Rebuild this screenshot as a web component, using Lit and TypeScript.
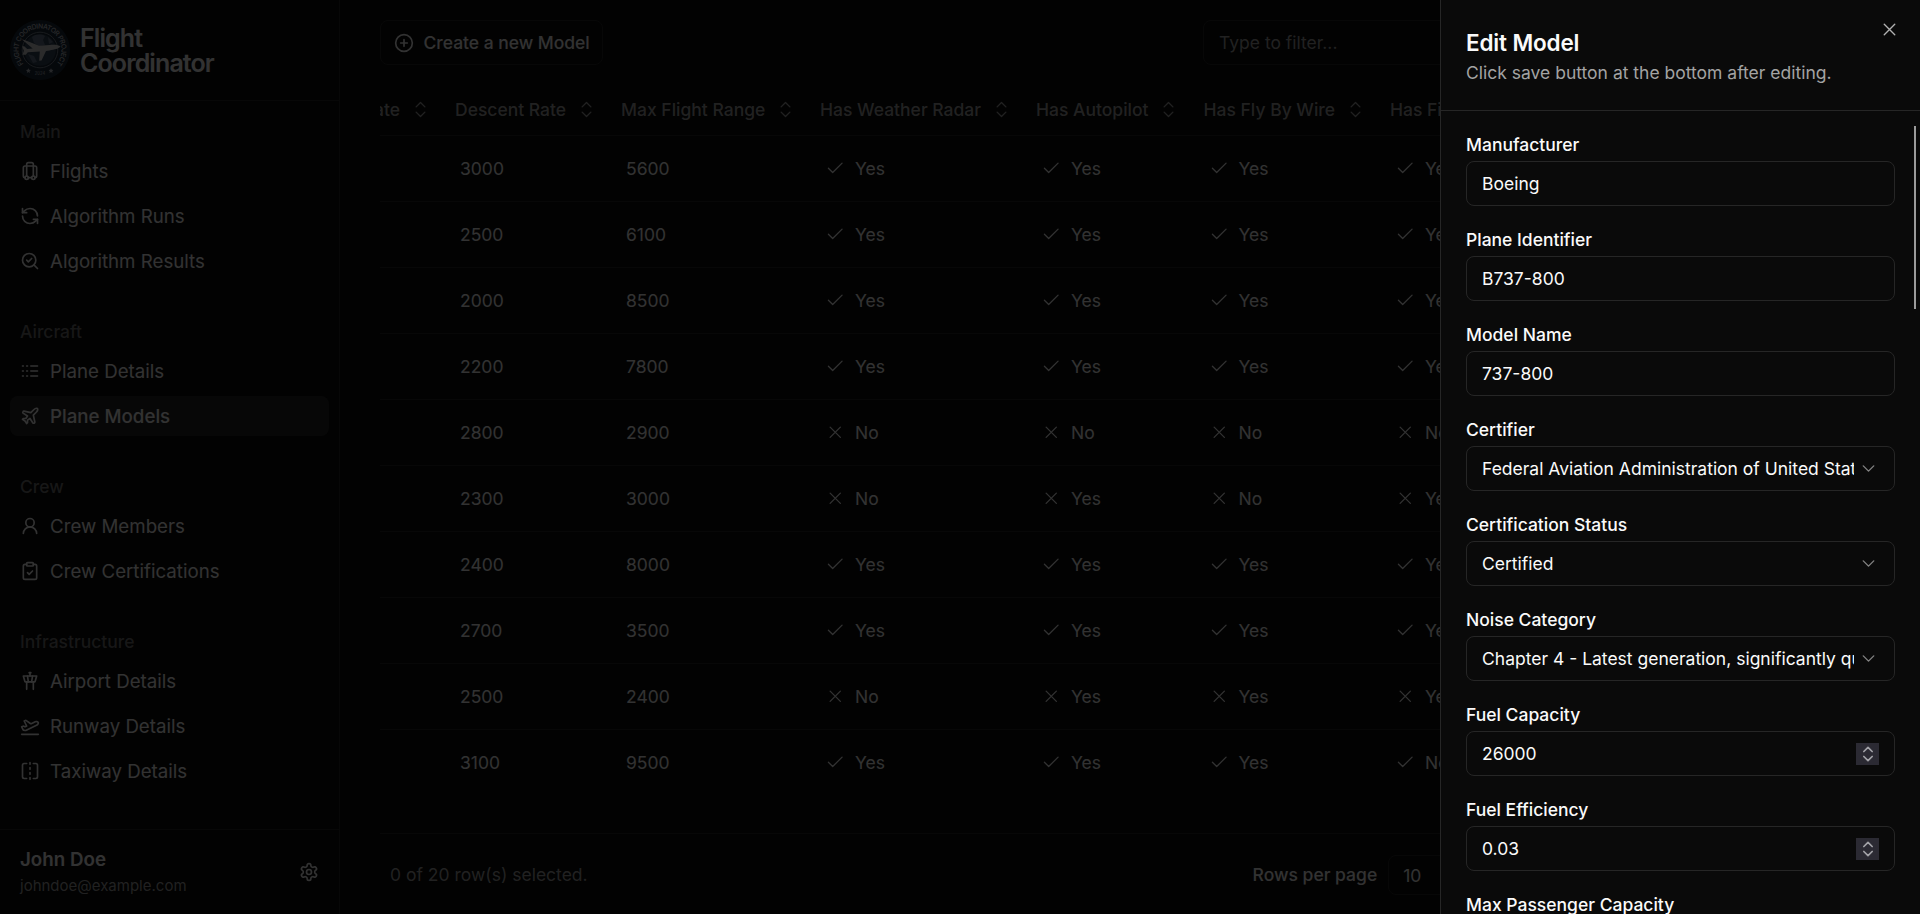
import { LitElement, html, css, svg } from "lit";
import { customElement } from "lit/decorators.js";

const paths: Record<string, any> = {
  luggage: svg`<path d="M6 20a2 2 0 0 1-2-2V8a2 2 0 0 1 2-2h12a2 2 0 0 1 2 2v10a2 2 0 0 1-2 2"/><path d="M8 18V4a2 2 0 0 1 2-2h4a2 2 0 0 1 2 2v14"/><path d="M10 20h4"/><circle cx="16" cy="20" r="2"/><circle cx="8" cy="20" r="2"/>`,
  refresh: svg`<path d="M21 12a9 9 0 0 0-9-9 9.75 9.75 0 0 0-6.74 2.74L3 8"/><path d="M3 3v5h5"/><path d="M3 12a9 9 0 0 0 9 9 9.75 9.75 0 0 0 6.74-2.74L21 16"/><path d="M16 16h5v5"/>`,
  search: svg`<path d="m8 11 2 2 4-4"/><circle cx="11" cy="11" r="8"/><path d="m21 21-4.3-4.3"/>`,
  logs: svg`<path d="M13 12h8M13 18h8M13 6h8M3 12h1M3 18h1M3 6h1M8 12h1M8 18h1M8 6h1"/>`,
  plane: svg`<path d="M17.8 19.2 16 11l3.5-3.5C21 6 21.5 4 21 3c-1-.5-3 0-4.5 1.5L13 8 4.8 6.2c-.5-.1-.9.1-1.1.5l-.3.5c-.2.5-.1 1 .3 1.3L9 12l-2 3H4l-1 1 3 2 2 3 1-1v-3l3-2 3.5 5.3c.3.4.8.5 1.3.3l.5-.2c.4-.3.6-.7.5-1.2z"/>`,
  user: svg`<circle cx="12" cy="8" r="5"/><path d="M20 21a8 8 0 0 0-16 0"/>`,
  clipboard: svg`<rect width="8" height="4" x="8" y="2" rx="1"/><path d="M16 4h2a2 2 0 0 1 2 2v14a2 2 0 0 1-2 2H6a2 2 0 0 1-2-2V6a2 2 0 0 1 2-2h2"/><path d="m9 14 2 2 4-4"/>`,
  tower: svg`<path d="M18.2 12.27 20 6H4l1.8 6.27a1 1 0 0 0 .95.73h10.5a1 1 0 0 0 .96-.73Z"/><path d="M8 13v9M16 22v-9M9 6l1 7M15 6l-1 7M12 6V2M13 2h-2"/>`,
  takeoff: svg`<path d="M2 22h20"/><path d="M6.36 17.4 4 17l-2-4 1.1-.55a2 2 0 0 1 1.8 0l.17.1a2 2 0 0 0 1.8 0L8 12 5 6l.9-.45a2 2 0 0 1 2.09.2l4.02 3a2 2 0 0 0 2.1.2l4.19-2.06a2.41 2.41 0 0 1 1.73-.17L21 7a1.4 1.4 0 0 1 .87 1.99l-.38.76c-.23.46-.6.84-1.07 1.08L7.58 17.2a2 2 0 0 1-1.22.18Z"/>`,
  flip: svg`<path d="M8 3H5a2 2 0 0 0-2 2v14c0 1.1.9 2 2 2h3"/><path d="M16 3h3a2 2 0 0 1 2 2v14a2 2 0 0 1-2 2h-3"/><path d="M12 20v2M12 14v2M12 8v2M12 2v2"/>`,
  settings: svg`<path d="M12.22 2h-.44a2 2 0 0 0-2 2v.18a2 2 0 0 1-1 1.73l-.43.25a2 2 0 0 1-2 0l-.15-.08a2 2 0 0 0-2.73.73l-.22.38a2 2 0 0 0 .73 2.73l.15.1a2 2 0 0 1 1 1.72v.51a2 2 0 0 1-1 1.74l-.15.09a2 2 0 0 0-.73 2.73l.22.38a2 2 0 0 0 2.73.73l.15-.08a2 2 0 0 1 2 0l.43.25a2 2 0 0 1 1 1.73V20a2 2 0 0 0 2 2h.44a2 2 0 0 0 2-2v-.18a2 2 0 0 1 1-1.73l.43-.25a2 2 0 0 1 2 0l.15.08a2 2 0 0 0 2.73-.73l.22-.39a2 2 0 0 0-.73-2.73l-.15-.08a2 2 0 0 1-1-1.74v-.5a2 2 0 0 1 1-1.74l.15-.09a2 2 0 0 0 .73-2.73l-.22-.38a2 2 0 0 0-2.73-.73l-.15.08a2 2 0 0 1-2 0l-.43-.25a2 2 0 0 1-1-1.73V4a2 2 0 0 0-2-2z"/><circle cx="12" cy="12" r="3"/>`,
  plus: svg`<circle cx="12" cy="12" r="10"/><path d="M8 12h8M12 8v8"/>`,
  sort: svg`<path d="m7 15 5 5 5-5M7 9l5-5 5 5"/>`,
  check: svg`<path d="M20 6 9 17l-5-5"/>`,
  cross: svg`<path d="M18 6 6 18M6 6l12 12"/>`,
  down: svg`<path d="m6 9 6 6 6-6"/>`,
};
const icon = (name: string, size = 20, stroke = 2) =>
  html`<svg class="icon" width=${size} height=${size} viewBox="0 0 24 24" fill="none" stroke="currentColor" stroke-width=${stroke} stroke-linecap="round" stroke-linejoin="round">${paths[name]}</svg>`;

const nav = [
  { title: "Main", items: [["luggage", "Flights"], ["refresh", "Algorithm Runs"], ["search", "Algorithm Results"]] },
  { title: "Aircraft", items: [["logs", "Plane Details"], ["plane", "Plane Models"]] },
  { title: "Crew", items: [["user", "Crew Members"], ["clipboard", "Crew Certifications"]] },
  { title: "Infrastructure", items: [["tower", "Airport Details"], ["takeoff", "Runway Details"], ["flip", "Taxiway Details"]] },
];
const columns = ["Climb Rate", "Descent Rate", "Max Flight Range", "Has Weather Radar", "Has Autopilot", "Has Fly By Wire", "Has Fire Suppression"];

type Flag = [icon: boolean, label: string];
const Y: Flag = [true, "Yes"];
const N: Flag = [false, "No"];
const XY: Flag = [false, "Yes"];
const CN: Flag = [true, "No"];
const rows: { descent: string; range: string; flags: Flag[] }[] = [
  { descent: "3000", range: "5600", flags: [Y, Y, Y, Y] },
  { descent: "2500", range: "6100", flags: [Y, Y, Y, Y] },
  { descent: "2000", range: "8500", flags: [Y, Y, Y, Y] },
  { descent: "2200", range: "7800", flags: [Y, Y, Y, Y] },
  { descent: "2800", range: "2900", flags: [N, N, N, N] },
  { descent: "2300", range: "3000", flags: [N, XY, N, XY] },
  { descent: "2400", range: "8000", flags: [Y, Y, Y, Y] },
  { descent: "2700", range: "3500", flags: [Y, Y, Y, Y] },
  { descent: "2500", range: "2400", flags: [N, XY, XY, XY] },
  { descent: "3100", range: "9500", flags: [Y, Y, Y, CN] },
];
const fields: [string, string, string][] = [
  ["Manufacturer", "Boeing", "text"],
  ["Plane Identifier", "B737-800", "text"],
  ["Model Name", "737-800", "text"],
  ["Certifier", "Federal Aviation Administration of United States", "select"],
  ["Certification Status", "Certified", "select"],
  ["Noise Category", "Chapter 4 - Latest generation, significantly quieter", "select"],
  ["Fuel Capacity", "26000", "number"],
  ["Fuel Efficiency", "0.03", "number"],
  ["Max Passenger Capacity", "189", "number"],
];

@customElement("app-root")
export class AppRoot extends LitElement {
  static styles = css`
    :host { display: block; position: relative; width: 1920px; height: 914px; overflow: hidden; background: #0a0a0a; color: #fafafa; font: 400 17.5px/25px Inter, sans-serif; }
    * { box-sizing: border-box; }
    .icon { display: block; flex: none; }
    .page { display: flex; height: 914px; overflow: hidden; }
    .side { width: 340px; border-right: 1px solid #262626; display: flex; flex-direction: column; }
    .brand { height: 101px; border-bottom: 1px solid #262626; display: flex; align-items: center; padding-left: 10px; gap: 10px; }
    .brand .name { font: 600 25px/25px Inter, sans-serif; letter-spacing: -0.9px; padding-top: 1px; }
    .nav { flex: 1; padding: 10px 10px 0; }
    .group { margin-bottom: 30px; }
    .title { height: 40px; padding: 8px 10px; font-weight: 500; color: #737373; }
    .item { height: 40px; margin-bottom: 5px; padding: 0 10px; display: flex; align-items: center; gap: 10px; border-radius: 8px; font-size: 18.7px; }
    .item.on { background: #262626; font-weight: 500; }
    .account { height: 85px; border-top: 1px solid #262626; display: flex; align-items: center; justify-content: space-between; padding: 0 20px; }
    .person { padding-top: 2px; }
    .who { font-weight: 600; font-size: 18.75px; line-height: 26px; }
    .mail { font-size: 15px; line-height: 26px; color: #a3a3a3; }
    .main { flex: 1; min-width: 0; padding: 20px 0 0 40px; display: flex; flex-direction: column; }
    .bar { display: flex; flex: none; height: 45px; }
    .create { width: 223px; border: 1px solid #262626; border-radius: 8px; display: flex; align-items: center; padding-left: 13px; gap: 9.5px; font-weight: 500; letter-spacing: -0.03px; }
    .filter { margin-left: 600px; width: 400px; border: 1px solid #262626; border-radius: 8px; padding: 9px 15px; color: #a3a3a3; }
    .grid { flex: none; overflow: hidden; height: 768px; padding-top: 20px; }
    .row { display: grid; grid-template-columns: 65px 166px 199px 216px 167.5px 186.5px 300px; height: 66px; border-bottom: 1px solid #262626; align-items: center; }
    .row:last-child { border: 0; padding-bottom: 1px; }
    .row.head { height: 51px; padding-bottom: 2px; color: #a3a3a3; font-weight: 500; }
    .th { display: flex; align-items: center; gap: 9.5px; padding-left: 10px; white-space: nowrap; }
    .th:first-child { justify-content: flex-end; padding-right: 14.5px; }
    .td { display: flex; align-items: center; padding-left: 15px; gap: 9.5px; }
    .td .icon { margin-top: -1px; }
    .foot { flex: none; width: 1500px; height: 82px; border-top: 1px solid #262626; display: flex; align-items: center; padding: 0 10px; color: #a3a3a3; }
    .rpp { color: #fafafa; font-weight: 500; margin-left: 665px; }
    .ten { margin-left: 11px; width: 90px; height: 40px; border: 1px solid #262626; border-radius: 8px; color: #fafafa; padding: 7px 14px; }
    .shade { position: absolute; inset: 0; background: rgba(0, 0, 0, 0.8); }
    .sheet { position: absolute; top: 0; right: 0; width: 480px; height: 914px; background: #0a0a0a; border-left: 1px solid #262626; overflow: hidden; }
    .head2 { height: 111px; border-bottom: 1px solid #262626; padding: 30px 25px 0; }
    .h { font: 600 22.5px/26px Inter, sans-serif; letter-spacing: -0.15px; }
    .sub { color: #a3a3a3; margin-top: 4px; }
    .close { position: absolute; right: 20px; top: 19px; opacity: 0.7; }
    .form { padding: 21px 25px; display: flex; flex-direction: column; gap: 15px; }
    .field { height: 80px; flex: none; }
    .label { font-weight: 500; height: 25px; margin-bottom: 4px; }
    .box { height: 45px; border: 1px solid #262626; border-radius: 8px; display: flex; align-items: center; justify-content: space-between; padding: 0 15px; white-space: nowrap; }
    .val { overflow: hidden; }
    .clip { width: 372px; }
    .sel { opacity: 0.5; }
    .spin { width: 23px; height: 22px; background: #2b2a33; color: #a3a3a8; display: flex; align-items: center; justify-content: center; }
    .thumb { position: absolute; right: 4px; top: 126px; width: 2px; height: 183px; background: #9b9b9b; }
  `;

  logo() {
    return html`<svg class="icon" width="60" height="60" viewBox="0 0 60 60">
      <circle cx="30" cy="30" r="30" fill="#1c2a3a"/>
      <defs><path id="arc" d="M13.5 43.8A21.5 21.5 0 1 1 46.5 43.8"/></defs>
      <circle cx="30" cy="30" r="17.8" fill="none" stroke="#76828e" stroke-width="1"/>
      <circle cx="30" cy="30" r="15.8" fill="#34465a"/>
      <path d="M22 17c4-3 9-3 13-1l-2 4 2 5-6 1-5-3zM38 17l5 5-4 2zM18 34l6 2 3 6-4 1z" fill="#65768a"/>
      <path d="M12 19.5c2 0 3 .8 5 1.6l12 4.6 11-.8c5-.4 9 .2 10.500 1.700-1.600 2-6 3.200-11 3.800l-3.500.600-4.500 9.500-2.300.300.600-9.300-12 .700-2 2.500H12.500l1.300-4-1.600-4.500h2l3 2.700 5.500-.300z" fill="#d8d8d8"/>
      <text fill="#c4cad0" font-family="Inter" font-size="6.8" font-weight="500" textLength="97"><textPath href="#arc" textLength="97">FLIGHT COORDINATOR PROJECT</textPath></text>
      <text x="30" y="54.800" text-anchor="middle" fill="#b8bec5" font-family="Inter" font-size="4.2">2024</text>
      <path d="m18.400 48.300.8 1.500 1.600.2-1.200 1.200.3 1.700-1.500-.8-1.500.8.3-1.700-1.200-1.200 1.600-.2zM41 48.300l.8 1.500 1.600.2-1.200 1.200.3 1.700-1.500-.8-1.500.8.3-1.700-1.200-1.200 1.600-.2z" fill="#b8bec5"/>
    </svg>`;
  }

  render() {
    return html`
      <div class="page">
        <aside class="side">
          <div class="brand">${this.logo()}<div class="name">Flight<br />Coordinator</div></div>
          <nav class="nav">
            ${nav.map((g) => html`<div class="group"><div class="title">${g.title}</div>
              ${g.items.map(([i, t]) => html`<div class="item ${t === "Plane Models" ? "on" : ""}">${icon(i)}<span>${t}</span></div>`)}</div>`)}
          </nav>
          <div class="account"><div class="person"><div class="who">John Doe</div><div class="mail">johndoe@example.com</div></div>${icon("settings")}</div>
        </aside>
        <main class="main">
          <div class="bar"><div class="create">${icon("plus")}<span>Create a new Model</span></div><div class="filter">Type to filter...</div></div>
          <div class="grid">
            <div class="row head">${columns.map((c) => html`<div class="th"><span>${c}</span>${icon("sort", 21, 1.6)}</div>`)}</div>
            ${rows.map((r) => html`<div class="row"><div></div><div class="td">${r.descent}</div><div class="td">${r.range}</div>
              ${r.flags.map(([ok, label]) => html`<div class="td">${icon(ok ? "check" : "cross", 20.5, 1.5)}<span>${label}</span></div>`)}</div>`)}
          </div>
          <div class="foot"><span>0 of 20 row(s) selected.</span><span class="rpp">Rows per page</span><div class="ten">10</div></div>
        </main>
      </div>
      <div class="shade"></div>
      <section class="sheet">
        <div class="head2"><div class="h">Edit Model</div><div class="sub">Click save button at the bottom after editing.</div></div>
        <div class="close">${icon("cross", 21, 1.6)}</div>
        <div class="form">
          ${fields.map(([l, v, k]) => html`<div class="field"><div class="label">${l}</div><div class="box"><div class="val ${k === "select" ? "clip" : ""}">${v}</div>
            ${k === "select" ? html`<div class="sel">${icon("down", 21, 1.6)}</div>` : k === "number" ? html`<div class="spin">${icon("sort", 20, 2)}</div>` : ""}</div></div>`)}
        </div>
        <div class="thumb"></div>
      </section>`;
  }
}
